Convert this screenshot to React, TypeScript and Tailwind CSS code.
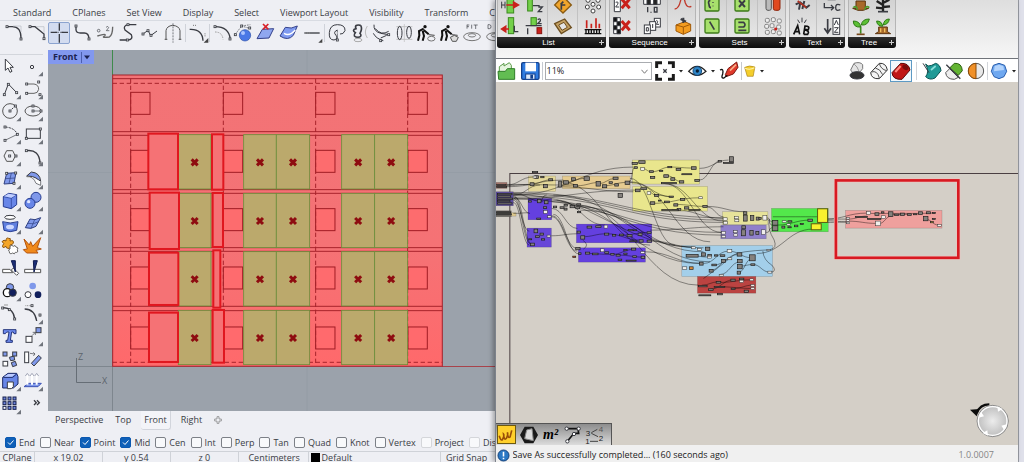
import type { ReactNode } from 'react';

interface IconDef {
  label: string;
  art: ReactNode;
  active?: boolean;
  sep?: boolean;
}

// All small icons are drawn on a 66 unit grid.
function Icon({ children, className = 'size-[22px]' }: { children: ReactNode; className?: string }) {
  return (
    <svg viewBox="0 0 66 66" fill="none" stroke="#3a3c43" strokeWidth="3" className={`shrink-0 ${className}`} aria-hidden="true">
      {children}
    </svg>
  );
}

function Pt({ x, y }: { x: number; y: number }) {
  return <rect x={x - 3} y={y - 3} width="6" height="6" fill="#eef0f4" strokeWidth="2.5" />;
}

const menuTabs = ['Standard', 'CPlanes', 'Set View', 'Display', 'Select', 'Viewport Layout', 'Visibility', 'Transform', 'Curve Tools'];

const digger = (
  <>
    <circle cx="27" cy="14" r="5" fill="#111" stroke="none" />
    <path d="M23 20L9 27L10 40L6 56M20 26L24 42L20 56M23 24L38 37" stroke="#111" strokeWidth="6" />
    <path d="M38 38L56 40" stroke="#444" />
  </>
);

const curveTools: IconDef[] = [
  { label: 'Fillet curves', art: <><path d="M12 14H28Q54 14 54 48" strokeWidth="4" /><path d="M30 12H54V30" stroke="#b9bcc4" strokeWidth="2" /><Pt x={12} y={14} /><Pt x={54} y={51} /></> },
  { label: 'Chamfer curves', art: <><path d="M11 14H27L54 36V50" strokeWidth="4" /><path d="M30 14H54V32" stroke="#b9bcc4" strokeWidth="2" /><Pt x={12} y={14} /><Pt x={54} y={50} /></> },
  { label: 'Connect curves', active: true, art: <><path d="M8 31H28M40 31H60M34 4V26M34 36V62" strokeWidth="4" /><path d="M22 31H46" strokeWidth="2" strokeDasharray="4 3" /></> },
  { label: 'Blend curves', art: <><path d="M15 12V24Q16 33 28 33H40Q54 33 54 52" strokeWidth="4" /><Pt x={15} y={12} /><Pt x={54} y={51} /></> },
  { label: 'Arc blend', art: <><path d="M10 42Q40 32 32 42Q20 48 46 45Q56 38 56 14" strokeWidth="4" stroke="#666" /><circle cx="14" cy="26" r="4" strokeWidth="2" /><path d="M36 16Q42 10 44 17L37 26H46" strokeWidth="2" /></> },
  { label: 'Adjustable blend', art: <><path d="M58 8H34Q17 11 24 24L43 38Q49 52 34 54H8" strokeWidth="4" /><Pt x={33} y={8} /><Pt x={31} y={54} /></> },
  { label: 'Match curve', art: <><path d="M12 36L27 25L35 41L54 27" strokeWidth="3" /><Pt x={12} y={36} /><Pt x={27} y={26} /><Pt x={36} y={40} /></> },
  { label: 'Symmetry', art: <><path d="M12 52V26Q14 12 32 10Q52 12 54 26V52M8 52H16M50 52H58" stroke="#555" /><path d="M33 4V62" strokeDasharray="6 3" strokeWidth="2" /></> },
  { label: 'Offset curve', sep: true, art: <><path d="M8 22Q46 20 48 56" strokeWidth="4" /><path d="M18 10H30M54 34V44" strokeWidth="3" stroke="#777" strokeDasharray="3 3" /><path d="M64 48v14H50z" fill="#444" stroke="none" /></> },
  { label: 'Offset multiple', sep: true, art: <><path d="M12 14Q54 14 58 52" strokeWidth="4" /><path d="M12 30Q34 30 36 52" stroke="#999" strokeDasharray="4 3" /><Pt x={12} y={14} /><Pt x={57} y={51} /></> },
  { label: 'Curve from surface', art: <><circle cx="36" cy="40" r="17" fill="#4a78e6" stroke="#2c4fa8" strokeWidth="2" /><circle cx="30" cy="33" r="6" fill="#a9c3ff" stroke="none" /><path d="M6 38L26 12L46 18M26 12L52 8" strokeWidth="2" strokeDasharray="5 3" /><Pt x={7} y={38} /><Pt x={26} y={12} /><Pt x={50} y={18} /></> },
  { label: 'Delete on surface', art: <><path d="M6 50L22 22L56 20L42 48Z" fill="#8fa7f0" stroke="#33408a" /><path d="M24 6L40 22M40 6L24 22" stroke="#d8232a" strokeWidth="5" /></> },
  { label: 'Project to surface', art: <><path d="M6 42L22 16Q40 22 58 12L46 40Q30 58 6 42Z" fill="#7f9af0" stroke="#33408a" /><path d="M18 34Q34 44 52 24" stroke="#fff" strokeWidth="4" /></> },
  { label: 'Extend curve', art: <><path d="M10 33H56" strokeWidth="4" /><path d="M12 33H30" stroke="#888" strokeWidth="5" strokeDasharray="3 3" /><path d="M64 50v12H52z" fill="#444" stroke="none" /></> },
  { label: 'Rebuild', sep: true, art: <><path d="M10 32Q12 8 34 8Q58 8 57 26Q52 38 42 36M10 32Q8 54 24 54Q38 50 30 40Q20 30 34 24" /><path d="M34 34V54M34 24V32" strokeWidth="2" /><Pt x={34} y={54} /></> },
  { label: 'Fair', art: <><path d="M38 10Q18 6 24 20Q10 24 22 32Q12 44 30 46Q44 44 36 34Q44 20 38 10" strokeWidth="5" /><path d="M58 12Q46 30 58 48" stroke="#bbb" /><ellipse cx="30" cy="54" rx="12" ry="5" stroke="#aaa" /></> },
  { label: 'Curve from 2 views', art: <><path d="M12 8Q10 28 32 34L56 38M10 34Q18 50 40 56M16 20Q34 42 56 28M32 48L50 40" /><Pt x={32} y={56} /><Pt x={56} y={38} /></> },
  { label: 'Cross sections', art: <><path d="M10 14H58M10 52H58" stroke="#aaa" strokeWidth="2" /><ellipse cx="20" cy="33" rx="7" ry="20" /><ellipse cx="48" cy="31" rx="7" ry="18" /><path d="M34 6V60" stroke="#bbb" strokeWidth="2" /></> },
  { label: 'Extract wireframe', art: <>{digger}<ellipse cx="46" cy="50" rx="11" ry="7" stroke="#777" /></> },
  { label: 'Tween curves', art: <>{digger}<path d="M34 46L46 40L58 46L52 58H40Z" fill="#ddd" stroke="#555" /></> },
  { label: 'Fit curve', art: <><path d="M18 8v12M18 9h7M18 14h6M32 8v12M38 9h12M44 9v12" strokeWidth="2" /><ellipse cx="33" cy="44" rx="25" ry="12" stroke="#777" /><ellipse cx="33" cy="40" rx="11" ry="5" stroke="#777" /></> },
  { label: 'Divide curve', art: <><path d="M12 8v12h4q5 0 5-6t-5-6z" strokeWidth="2" /><ellipse cx="33" cy="44" rx="25" ry="12" stroke="#777" /><ellipse cx="33" cy="40" rx="11" ry="5" stroke="#777" /></> },
];

const fly = <path d="M63 50v14H49z" fill="#70747c" stroke="none" />;
const blueFill = '#7f98ea';

const palette: IconDef[] = [
  { label: 'Pointer', art: <path d="M16 12V46L24 39L30 52L36 49L30 37H40Z" fill="#fff" /> },
  { label: 'Point', art: <><circle cx="30" cy="36" r="5" />{fly}</> },
  { label: 'Polyline', art: <><path d="M13 50L25 18L50 44" /><Pt x={13} y={50} /><Pt x={25} y={19} /><Pt x={50} y={44} />{fly}</> },
  { label: 'Curve', art: <><path d="M14 18H36Q50 20 50 34Q48 46 36 46H14" stroke="#666" /><Pt x={14} y={18} /><Pt x={50} y={12} /><Pt x={14} y={46} /><Pt x={54} y={50} />{fly}</> },
  { label: 'Circle', art: <><circle cx="30" cy="33" r="22" stroke="#555" /><path d="M30 33L45 18" strokeDasharray="5 3" /><Pt x={30} y={33} /><Pt x={46} y={18} />{fly}</> },
  { label: 'Ellipse', art: <><ellipse cx="33" cy="33" rx="24" ry="15" stroke="#555" /><path d="M33 33H56" strokeWidth="2" /><Pt x={33} y={33} /><Pt x={33} y={18} /><Pt x={57} y={33} />{fly}</> },
  { label: 'Arc', art: <><path d="M15 12Q44 14 52 34" strokeDasharray="7 3" /><path d="M15 52L52 34" strokeWidth="2" /><Pt x={15} y={12} /><Pt x={15} y={52} /><Pt x={52} y={34} />{fly}</> },
  { label: 'Rectangle', art: <><rect x="13" y="18" width="42" height="28" /><Pt x={13} y={46} /><Pt x={55} y={18} />{fly}</> },
  { label: 'Polygon', art: <><path d="M12 33L20 17H38L46 33L38 49H20Z" stroke="#555" /><Pt x={29} y={33} /><Pt x={48} y={33} />{fly}</> },
  { label: 'Fillet', art: <><path d="M13 17Q52 12 54 54" strokeWidth="4" /><Pt x={13} y={17} /><Pt x={54} y={54} />{fly}</> },
  { label: 'Surface from points', art: <><path d="M20 16L48 14L42 46L12 48Z" fill={blueFill} stroke="#2e3f80" /><path d="M34 15L27 47M16 32L45 30" stroke="#2e3f80" strokeWidth="2" /><Pt x={20} y={16} /><Pt x={47} y={15} /><Pt x={42} y={46} />{fly}</> },
  { label: 'Surface from curves', art: <><path d="M14 24L28 12Q54 14 56 40L42 30Q34 24 14 24" fill={blueFill} /><path d="M14 26Q34 24 42 46L56 52V40" fill="#fff" strokeWidth="2" />{fly}</> },
  { label: 'Box', art: <><path d="M10 20L26 10L50 14V44L34 56L10 50Z" fill="#6886e8" stroke="#263c90" /><path d="M10 20L34 25V56M34 25L50 14" stroke="#263c90" strokeWidth="2" /><path d="M12 19L26 11L48 15L34 23Z" fill="#c0ceff" stroke="none" />{fly}</> },
  { label: 'Sphere', art: <><circle cx="42" cy="22" r="15" fill={blueFill} stroke="#263c90" /><circle cx="24" cy="40" r="15" fill="#6886e8" stroke="#263c90" /><circle cx="20" cy="35" r="5" fill="#dfe7ff" stroke="none" />{fly}</> },
  { label: 'Cylinder', art: <><ellipse cx="30" cy="13" rx="16" ry="6" fill="#fff" /><path d="M8 26Q30 34 54 26L50 52Q30 60 12 52Z" fill="#5f7fe0" stroke="#263c90" /><ellipse cx="30" cy="42" rx="12" ry="7" fill="#cdd8ff" stroke="none" />{fly}</> },
  { label: 'Surface edit', art: <><path d="M24 18Q38 24 56 14L42 40Q28 50 10 44Z" fill={blueFill} stroke="#2e3f80" /><path d="M17 31Q34 36 50 26M38 20L27 46" stroke="#2e3f80" strokeWidth="2" />{fly}</> },
  { label: 'Join', art: <><path d="M6 20Q12 12 18 18Q18 6 26 10Q34 8 30 18Q42 14 40 24Q38 30 30 30Q34 42 24 40Q18 40 18 34Q6 42 8 32Q8 28 12 26Z" fill="#f4a62a" stroke="#8a5410" /><path d="M30 34Q36 28 40 34Q46 28 48 36Q58 38 52 44Q56 54 46 52Q44 60 38 54Q28 60 28 50Q22 44 30 42Z" fill="#fff" stroke="#666" /></> },
  { label: 'Explode', art: <path d="M6 12L22 30L26 20L32 34L56 8L46 38L58 42L42 46L48 54H14L4 44L16 42Z" fill="#f08a1c" stroke="#b4530c" /> },
  { label: 'Trim', art: <><path d="M8 34H30L38 44H8ZM34 36L40 30L56 46L50 52Z" fill="#fff" stroke="#555" /><path d="M34 8H46V42Z" fill="#1c2f78" stroke="#101c50" /></> },
  { label: 'Split', art: <><path d="M8 34H56V44H8Z" fill="#fff" stroke="#555" /><path d="M34 8H46L36 42Z" fill="#1c2f78" stroke="#101c50" /></> },
  { label: 'Group', art: <><circle cx="30" cy="22" r="11" fill={blueFill} /><circle cx="22" cy="38" r="12" fill="#fff" stroke="#111" strokeWidth="4" /><circle cx="38" cy="38" r="11" fill="#111f5c" />{fly}</> },
  { label: 'Ungroup', art: <><circle cx="32" cy="18" r="10" fill={blueFill} stroke="none" /><circle cx="18" cy="44" r="9" fill="#fff" /><circle cx="48" cy="44" r="10" fill="#111f5c" stroke="none" /></> },
  { label: 'Edit points', art: <><path d="M8 14Q40 14 44 48" strokeWidth="4" /><path d="M12 6H24" stroke="#999" /><Pt x={8} y={15} /><Pt x={28} y={20} /><Pt x={44} y={48} /></> },
  { label: 'Control points', art: <><path d="M8 18Q38 18 44 54" strokeWidth="4" /><path d="M10 8H30M54 34V42" stroke="#999" strokeDasharray="3 2" /><Pt x={30} y={8} /><Pt x={54} y={36} />{fly}</> },
  { label: 'Text', art: <path d="M10 14H48V26H42L40 21H35L31 46H37V52H18V46H23L27 21H20L16 26H10Z" fill="#6f8cf0" stroke="#26367c" /> },
  { label: 'Scale', art: <><rect x="12" y="34" width="18" height="18" fill="#fff" /><rect x="42" y="8" width="15" height="15" fill={blueFill} /><path d="M30 32L40 22M32 22h8v8" strokeWidth="2" />{fly}</> },
  { label: 'Array', art: <><rect x="9" y="12" width="12" height="12" fill={blueFill} /><path d="M28 28L42 24L44 36L32 38Z" fill={blueFill} /><rect x="38" y="12" width="12" height="12" fill={blueFill} /><rect x="9" y="40" width="14" height="14" fill="#fff" /><path d="M34 44L46 40L50 52L38 56Z" fill={blueFill} /></> },
  { label: 'Rotate', art: <><rect x="8" y="12" width="12" height="32" fill="#fff" /><path d="M28 46L50 22L58 30L36 54Z" fill={blueFill} /><path d="M24 16L38 18M34 13L39 18L34 24" strokeWidth="2" /></> },
  { label: 'Boolean', art: <><path d="M8 22L24 10H50L54 20V42L40 54H8Z" fill="#6886e8" stroke="#1c2a66" /><path d="M10 22H38L50 12" stroke="#1c2a66" /><path d="M22 36H40V50L34 56H22Z" fill="#fff" /><path d="M12 20L25 12H46L36 20Z" fill="#bccbff" stroke="none" />{fly}</> },
  { label: 'Offset surface', art: <><path d="M6 50H48L58 40H20Z" fill="#7f98ea" stroke="#3d53b5" /><path d="M16 44V14M30 44V14M44 44V14" stroke="#fff" strokeWidth="6" /><path d="M10 18L16 10L22 18M24 18L30 10L36 18M38 18L44 10L50 18" strokeWidth="3" stroke="#a4a8b8" />{fly}</> },
  { label: 'Grid array', art: <>{[12, 26, 40].map((y) => [9, 24, 39].map((x) => <rect key={`${x}-${y}`} x={x} y={y} width="9" height="9" fill={x === 9 && y === 40 ? '#fff' : '#6f86e0'} stroke="#17204d" />))}{fly}</> },
  { label: 'More tools', art: <path d="M36 22L43 29L36 36M45 22L52 29L45 36" strokeWidth="4" /> },
];

const snaps = [
  { name: 'End', on: true }, { name: 'Near', on: false }, { name: 'Point', on: true }, { name: 'Mid', on: true },
  { name: 'Cen', on: false }, { name: 'Int', on: false }, { name: 'Perp', on: false }, { name: 'Tan', on: false },
  { name: 'Quad', on: false }, { name: 'Knot', on: false }, { name: 'Vertex', on: false },
  { name: 'Project', on: false, faint: true }, { name: 'Disable', on: false, faint: true },
];

const floorY = [209, 385, 560, 736];
const panelCols = [[235, 98], [431, 98], [529, 100], [725, 99], [824, 99]];
const marks = [[145, 206, 89, 167], [149, 383, 88, 169], [147, 563, 88, 157], [147, 743, 87, 148], [336, 208, 34, 166], [338, 384, 31, 162], [340, 556, 21, 172], [338, 735, 34, 158]];

function Facade() {
  return (
    <svg viewBox="48 50 447 361" preserveAspectRatio="xMinYMin slice" className="absolute inset-0 size-full">
      <defs>
        <linearGradient id="wall" x1="0" y1="0" x2="0" y2="1">
          <stop offset="0" stopColor="#f27376" />
          <stop offset="0.6" stopColor="#f57275" />
          <stop offset="1" stopColor="#ff696b" />
        </linearGradient>
      </defs>
      <path d="M307 50V412M48 172.500H495" stroke="#929aa3" strokeWidth="1" opacity="0.6" />
      <path d="M48 366.500H112M112.500 366V412" stroke="#7e868e" />
      <path d="M112.500 50V75" stroke="#3f8a4c" />
      <path d="M442 366.500H495" stroke="#a8434b" />
      <g transform="translate(100 65) scale(0.3333)" fill="none">
        <rect x="38" y="30" width="989" height="874" fill="url(#wall)" stroke="#a3222b" strokeWidth="3" />
        {[82, 256, 431, 606, 786].map((y) =>
          [92, 370, 647, 924].map((x) => (
            <rect key={`${x}-${y}`} x={x} y={y} width="58" height="66" fill="#ff6a6d" fillOpacity={y > 82 ? 0.8 : 0.2} stroke="#a01c24" strokeWidth="3" />
          ))
        )}
        <path d="M38 41H1027M38 200H1027M38 211H1027M38 374H1027M38 385H1027M38 548H1027M38 559H1027M38 724H1027M38 737H1027" stroke="#a8232b" strokeWidth="3" />
        <path d="M38 55H1027M38 892H1027M92 41V895M370 41V895M647 41V895M923 41V895" stroke="#a8232b" strokeWidth="3" strokeDasharray="13 8" />
        {floorY.map((y) =>
          panelCols.map(([x, w]) => (
            <g key={`${x}-${y}`}>
              <rect x={x} y={y} width={w} height="163" fill="#bba96c" stroke="#6c8f3c" strokeWidth="2.500" />
              <path d={`M${x + w / 2 - 9} ${y + 74}l18 18m0 -18l-18 18`} stroke="#8e0c10" strokeWidth="9" />
            </g>
          ))
        )}
        {marks.map(([x, y, w, h]) => (
          <rect key={`${x}-${y}`} x={x} y={y} width={w} height={h} fill="#f57275" stroke="#e0171f" strokeWidth="6" />
        ))}
      </g>
      <path d="M76.500 358V382.500H101" stroke="#666e76" fill="none" />
      <g fill="#5c646c" fontSize="9" className="font-['Open_Sans',sans-serif]">
        <text x="78" y="360">Z</text>
        <text x="102" y="384">X</text>
      </g>
    </svg>
  );
}

// Graph coordinates: [x, y, w, h]
const groups: [number, number, number, number, string][] = [
  [115, 93, 82, 46, '#e3d79a'], [217, 93, 203, 38, '#e6cb90'], [427, 45, 201, 72, '#e9e68d'], [428, 124, 224, 74, '#e9e68d'],
  [114, 160, 71, 64, '#6440df'], [111, 249, 73, 57, '#6747d8'], [259, 237, 226, 56, '#6440df'], [265, 308, 201, 43, '#6440df'],
  [697, 200, 136, 38, '#e6e29a'], [692, 240, 136, 41, '#9080cb'], [575, 301, 272, 93, '#a3cfea'], [622, 394, 175, 50, '#bb4341'],
  [844, 190, 170, 70, '#53e84b'], [1066, 196, 289, 53, '#efa09d'],
  [18, 112, 33, 18, '#a0736b'], [18, 140, 52, 42, '#5a4b9a'], [18, 197, 46, 18, '#6f6c66'], [64, 203, 14, 10, '#dcc78e'],
];

const wires = [
  [50, 120, 128, 96], [50, 122, 115, 118], [50, 125, 220, 105], [50, 118, 250, 120], [70, 145, 160, 170], [70, 150, 150, 120], [70, 155, 120, 205],
  [70, 150, 430, 66], [70, 160, 440, 135], [70, 142, 700, 218], [70, 146, 700, 225], [70, 152, 700, 232], [70, 158, 695, 262],
  [70, 162, 695, 270], [70, 148, 640, 308], [185, 170, 630, 355], [190, 150, 605, 306], [200, 125, 430, 140], [210, 110, 480, 300],
  [70, 165, 118, 258], [70, 172, 118, 300], [72, 160, 122, 296], [74, 155, 126, 298], [184, 272, 262, 266], [185, 212, 262, 310], [185, 215, 262, 318],
  [190, 208, 266, 326], [185, 190, 262, 250], [70, 205, 115, 203], [200, 165, 345, 240], [260, 180, 625, 420], [270, 185, 660, 350], [270, 195, 640, 320],
  [420, 110, 545, 155], [420, 100, 555, 300], [420, 112, 660, 290], [520, 115, 695, 262], [520, 115, 700, 228], [545, 193, 700, 220], [480, 255, 700, 245],
  [485, 288, 610, 306], [465, 320, 635, 355], [415, 110, 437, 66], [628, 70, 715, 45], [628, 105, 690, 48], [650, 184, 765, 200], [652, 186, 700, 215],
  [828, 218, 848, 230], [828, 222, 848, 240], [828, 262, 848, 248], [848, 215, 985, 215], [860, 240, 960, 225], [800, 325, 968, 252], [1012, 222, 1070, 222],
  [1012, 227, 1070, 230], [1012, 232, 1072, 231], [1005, 222, 1130, 204], [1072, 228, 1160, 235], [1073, 222, 1130, 213], [1165, 236, 1205, 212],
  [1130, 205, 1280, 205], [1280, 205, 1335, 204], [1305, 222, 1345, 240], [1205, 208, 1260, 208],
  [120, 118, 185, 104], [145, 170, 170, 150], [225, 112, 285, 100], [260, 122, 330, 112], [325, 116, 375, 100], [340, 122, 410, 112],
  [455, 70, 485, 80], [485, 80, 540, 66], [530, 92, 575, 110], [540, 66, 610, 69], [475, 142, 500, 150], [500, 150, 545, 155], [555, 178, 645, 184], [485, 175, 630, 158],
  [275, 275, 350, 266], [350, 266, 450, 285], [395, 270, 475, 262], [290, 325, 365, 328], [365, 328, 430, 313], [385, 330, 460, 336],
  [600, 332, 660, 336], [640, 355, 715, 318], [660, 376, 720, 342], [690, 388, 750, 350], [670, 360, 745, 328], [715, 318, 785, 338], [745, 382, 785, 340], [750, 363, 788, 358],
  [635, 420, 685, 410], [660, 432, 730, 404], [685, 412, 785, 404], [690, 425, 788, 430], [730, 430, 788, 420], [788, 358, 838, 381],
];

const greyNodes = [
  [127, 79, 16, 4], [120, 113, 12, 9], [134, 92, 11, 8], [152, 94, 10, 4], [160, 118, 12, 10], [176, 101, 12, 6], [206, 108, 8, 18], [220, 107, 15, 10], [244, 98, 12, 8], [250, 118, 12, 8],
  [282, 95, 16, 11], [318, 109, 13, 14], [337, 119, 13, 9], [369, 96, 15, 7], [357, 110, 10, 5], [374, 116, 11, 7], [405, 108, 14, 10], [384, 145, 13, 12], [426, 52, 16, 6], [446, 47, 19, 8], [432, 65, 10, 5],
  [478, 77, 12, 5], [481, 94, 13, 6], [508, 76, 10, 3], [533, 64, 12, 4], [558, 70, 14, 6], [521, 89, 14, 8], [542, 98, 12, 8], [575, 86, 30, 3], [604, 65, 14, 8], [568, 107, 13, 7], [614, 103, 14, 6], [514, 112, 45, 4],
  [436, 132, 14, 8], [452, 128, 18, 5], [493, 148, 13, 6], [481, 170, 13, 8], [505, 165, 8, 3], [523, 168, 15, 5], [537, 153, 13, 4], [551, 176, 12, 7], [571, 160, 13, 6], [561, 190, 11, 6], [583, 185, 13, 7], [515, 193, 50, 4], [596, 193, 34, 3], [638, 181, 13, 6],
  [142, 163, 11, 10], [163, 167, 11, 9], [115, 167, 9, 4], [160, 185, 10, 5], [140, 219, 12, 4], [132, 252, 11, 11], [150, 264, 10, 6], [136, 272, 12, 5], [121, 294, 12, 8], [154, 281, 10, 4], [116, 281, 9, 3],
  [210, 185, 12, 5], [222, 178, 10, 5], [222, 189, 9, 6], [240, 181, 14, 7], [257, 185, 12, 6], [260, 176, 12, 4], [262, 199, 10, 4], [190, 183, 10, 5],
  [261, 258, 10, 6], [272, 272, 12, 10], [291, 243, 14, 6], [317, 242, 16, 5], [343, 264, 13, 6], [367, 268, 10, 5], [388, 267, 12, 5], [411, 269, 15, 6], [414, 253, 13, 4], [444, 264, 12, 7], [471, 260, 12, 5], [430, 254, 10, 3], [419, 287, 22, 3], [447, 284, 12, 7], [471, 285, 13, 6],
  [257, 307, 13, 7], [265, 323, 8, 5], [286, 321, 13, 6], [307, 324, 17, 5], [344, 320, 12, 5], [362, 325, 10, 5], [378, 328, 12, 5], [401, 313, 10, 4], [424, 309, 13, 6], [401, 324, 10, 4], [384, 342, 11, 4], [408, 345, 30, 3], [428, 332, 11, 5], [453, 333, 11, 7],
  [684, 46, 10, 5], [700, 52, 30, 3], [718, 35, 12, 15], [760, 200, 10, 8], [760, 210, 11, 18], [781, 211, 10, 15], [798, 216, 9, 9], [755, 242, 11, 9], [754, 254, 12, 18], [779, 256, 10, 14], [797, 259, 9, 9], [806, 217, 7, 6],
  [847, 226, 16, 14], [847, 242, 16, 15], [875, 243, 9, 6], [893, 227, 12, 4], [893, 245, 10, 3], [913, 240, 10, 5], [953, 222, 14, 7], [930, 235, 10, 3],
  [588, 328, 36, 8], [634, 323, 12, 10], [646, 306, 13, 10], [628, 351, 11, 9], [653, 328, 11, 6], [673, 329, 10, 4], [690, 329, 14, 5], [665, 357, 14, 5], [657, 373, 12, 8], [694, 343, 12, 9], [741, 323, 14, 10], [742, 343, 14, 10], [742, 358, 14, 13], [741, 378, 10, 9], [778, 329, 17, 18], [782, 356, 12, 5],
  [625, 421, 26, 4], [655, 431, 14, 5], [672, 424, 32, 3], [678, 409, 14, 5], [722, 402, 13, 6], [748, 399, 13, 5], [723, 429, 12, 4], [762, 435, 13, 7], [682, 445, 15, 4], [626, 449, 36, 3],
  [1154, 203, 12, 8], [1173, 200, 8, 4], [1195, 200, 13, 14], [1212, 207, 14, 4], [1231, 204, 12, 7], [1252, 206, 11, 5], [1270, 206, 10, 3], [1285, 200, 12, 8], [1309, 200, 12, 6], [1326, 202, 9, 3], [1096, 214, 36, 3], [1132, 220, 40, 3], [1300, 214, 13, 13], [1326, 220, 9, 3],
  [20, 118, 28, 3], [20, 124, 30, 3], [22, 145, 44, 4], [22, 152, 40, 4], [22, 159, 46, 4], [22, 166, 38, 4], [22, 173, 44, 4], [20, 200, 42, 3], [20, 206, 44, 3],
];

const whiteNodes = [
  [129, 93, 10, 6], [161, 196, 11, 9], [173, 212, 10, 6], [171, 270, 10, 6], [342, 240, 11, 9], [332, 311, 10, 9], [452, 68, 11, 8], [471, 140, 11, 8], [626, 155, 11, 6], [452, 319, 12, 6],
  [699, 218, 12, 8], [700, 229, 12, 8], [733, 214, 12, 7], [734, 223, 12, 7], [818, 211, 12, 14], [694, 259, 12, 8], [695, 271, 11, 7], [730, 256, 11, 7], [731, 266, 11, 7], [814, 254, 12, 14], [876, 227, 12, 5], [890, 236, 10, 5],
  [604, 305, 12, 6], [622, 310, 12, 6], [711, 313, 14, 9], [713, 338, 12, 6], [652, 333, 12, 6], [577, 365, 13, 8], [687, 388, 13, 5], [833, 378, 12, 6], [830, 313, 10, 4], [779, 401, 11, 6], [748, 405, 12, 7], [782, 418, 11, 6], [782, 427, 11, 6],
  [1129, 199, 12, 9], [1173, 212, 12, 8], [1156, 228, 15, 14], [1068, 217, 10, 5], [1068, 224, 10, 5], [1068, 231, 10, 5], [1341, 238, 12, 6],
];

function curve([x1, y1, x2, y2]: number[]) {
  const d = Math.max(Math.abs(x2 - x1) * 0.45, 16);
  return `M${x1} ${y1}C${x1 + d} ${y1} ${x2 - d} ${y2} ${x2} ${y2}`;
}

function Graph() {
  return (
    <svg viewBox="496 82 522 363" preserveAspectRatio="xMinYMin slice" className="absolute inset-0 size-full">
      <g transform="translate(490 145) scale(0.3333)" fill="none">
        <path d="M59.500 900V85H1700" stroke="#4a3f42" strokeWidth="3" />
        {groups.map(([x, y, w, h, fill]) => (
          <rect key={`${x}-${y}`} x={x} y={y} width={w} height={h} fill={fill} stroke="#00000040" strokeWidth="1.500" />
        ))}
        <g stroke="#000" strokeOpacity="0.6" strokeWidth="2">
          {wires.map((w, i) => <path key={i} d={curve(w)} />)}
          <path d="M838 222Q830 250 852 285Q862 310 838 314M818 318Q820 345 845 360Q862 378 842 382M640 400Q670 380 730 330Q745 318 838 314M278 285Q300 300 280 312" />
        </g>
        <g fill="#85817d" stroke="#1c1c1c" strokeWidth="2">
          {greyNodes.map(([x, y, w, h], i) => <rect key={i} x={x} y={y} width={w} height={h} />)}
        </g>
        <g fill="#f1efec" stroke="#333" strokeWidth="1.500">
          {whiteNodes.map(([x, y, w, h], i) => <rect key={i} x={x} y={y} width={w} height={h} />)}
        </g>
        <rect x="598" y="365" width="11" height="8" fill="#d98b3a" stroke="#222" strokeWidth="2" />
        <rect x="248" y="333" width="9" height="4" fill="#c4491d" stroke="#222" strokeWidth="2" />
        <rect x="1321" y="229" width="8" height="4" fill="#d0b52b" stroke="#222" strokeWidth="2" />
        <g fill="#f8f22e" stroke="#5d5a10" strokeWidth="3">
          <rect x="982" y="191" width="30" height="41" />
          <rect x="963" y="236" width="30" height="18" />
        </g>
        <rect x="1037" y="106" width="367" height="232" stroke="#eec5c0" strokeWidth="12" />
        <rect x="1037" y="106" width="367" height="232" stroke="#d81a22" strokeWidth="8" />
      </g>
    </svg>
  );
}

const tile = <rect x="12" y="12" width="42" height="42" rx="4" fill="#a7e06c" stroke="#3c7a18" strokeWidth="4" />;
const redX = <path d="M32 18L56 46M56 18L32 46" stroke="#c9211b" strokeWidth="9" />;

interface RibbonGroup {
  name: string;
  width: string;
  columns: [IconDef, IconDef][];
}

const ribbon: RibbonGroup[] = [
  {
    name: 'List', width: 'w-[109px]', columns: [
      [
        { label: 'Insert items', art: <><rect x="24" y="0" width="20" height="60" fill="#74d04a" stroke="#3a8a1c" /><path d="M8 26V46M8 36H18M18 26V46" /><path d="M22 36H44M44 28L58 36L44 44Z" stroke="#c9211b" fill="#c9211b" strokeWidth="5" /></> },
        { label: 'List length', art: <><rect x="28" y="8" width="16" height="48" fill="#74d04a" stroke="#3a8a1c" /><path d="M10 42H30M20 34L8 42L20 50Z" stroke="#c9211b" fill="#c9211b" strokeWidth="5" /><path d="M46 32V50H58" strokeWidth="4" /></> },
      ],
      [
        { label: 'Sort list', art: <><rect x="14" y="2" width="14" height="52" fill="#74d04a" stroke="#3a8a1c" /><path d="M30 38H50M46 42H58L46 56H58" strokeWidth="4" /></> },
        { label: 'Split list', art: <><rect x="24" y="8" width="16" height="24" fill="#74d04a" stroke="#3a8a1c" /><rect x="42" y="38" width="14" height="18" fill="#c9211b" stroke="#8a1510" /><path d="M8 32H56M14 40V58M44 14Q54 8 52 18L44 26H56" strokeWidth="4" /></> },
      ],
      [
        { label: 'Shift list', sep: true, art: <><path d="M33 10L58 36L33 60L8 36Z" fill="#f0a52c" stroke="#8a5a10" strokeWidth="4" /><path d="M28 50V36H40M34 26L26 34" strokeWidth="5" /></> },
        { label: 'Weave', art: <><path d="M8 26L38 12L58 38L28 56Z" fill="#c4a062" stroke="#6d4f20" strokeWidth="4" /><path d="M20 30L36 22L46 37L30 46Z" fill="#e5e5e5" stroke="#6d4f20" /></> },
      ],
      [
        { label: 'Item index', sep: true, art: <>{[[33, 14], [18, 22], [48, 22], [33, 34], [16, 42], [50, 42], [33, 54]].map(([x, y]) => <circle key={`${x}-${y}`} cx={x} cy={y} r="6" fill="#fff" stroke="#444" />)}</> },
        { label: 'Sub list', art: <><path d="M12 56V44M20 56V44M28 56V44M36 56V44M44 56V44M52 56V44M8 56H58M8 44H58" strokeWidth="4" stroke="#111" /><path d="M14 40V16M28 40V26M42 40V10M52 40V26" stroke="#c9211b" strokeWidth="5" /></> },
      ],
    ],
  },
  {
    name: 'Sequence', width: 'w-[87px]', columns: [
      [
        { label: 'Cull index', art: <><path d="M10 4H28V56H10Z" fill="#fff" /><path d="M14 28Q24 24 20 34L14 42H24" />{redX}</> },
        { label: 'Cull pattern', art: <><path d="M8 8H28V56H8Z" fill="#fff" /><path d="M8 8h10v12h-10zM18 20h10v12h-10zM8 32h10v12h-10zM18 44h10v12h-10z" fill="#111" />{redX}</> },
      ],
      [
        { label: 'Range', sep: true, art: <><path d="M8 18H58V34H8Z" fill="#fff" /><path d="M18 18h10v16h-10zM38 18h10v16h-10z" fill="#222" /><path d="M20 42V58M30 56v3M40 43h8v14h-8z" strokeWidth="4" /></> },
        { label: 'Series', art: <><rect x="40" y="10" width="18" height="26" fill="#fff" /><rect x="26" y="20" width="18" height="26" fill="#fff" /><rect x="10" y="30" width="18" height="26" fill="#fff" /><path d="M16 38h6v10h-6zM35 27v12M46 16q8 2 0 12h8" /></> },
      ],
      [
        { label: 'Random', sep: true, art: <path d="M8 48Q20 48 26 22T40 30Q46 46 58 40" stroke="#c0392b" strokeWidth="4" /> },
        { label: 'Jitter', art: <><path d="M12 30L38 20L56 28V48L34 58L12 48Z" fill="#f39c1f" stroke="#a15a08" /><path d="M12 30L34 36V58M34 36L56 28" stroke="#a15a08" /><path d="M34 8V24M26 12L42 20" strokeWidth="6" /></> },
      ],
    ],
  },
  {
    name: 'Sets', width: 'w-[87px]', columns: [
      [
        { label: 'Create set', art: <>{tile}<path d="M28 22Q20 24 24 34Q24 44 30 44M36 28V30M36 38V40" strokeWidth="5" /></> },
        { label: 'Set difference', art: <>{tile}<path d="M26 20L40 44" strokeWidth="5" /></> },
      ],
      [
        { label: 'Set intersection', sep: true, art: <>{tile}<path d="M24 22L42 42M42 22L24 42" strokeWidth="6" /></> },
        { label: 'Sub set', art: <>{tile}<path d="M22 22H38Q46 29 38 36H22M22 46H46" strokeWidth="5" /></> },
      ],
      [
        { label: 'Replace members', sep: true, art: <><rect x="12" y="2" width="16" height="50" rx="6" fill="#bbb" stroke="#555" /><rect x="34" y="2" width="20" height="50" rx="6" fill="#e0491f" stroke="#8f240a" /></> },
        { label: 'Member index', art: <>{[[16, 16], [34, 14], [52, 18], [14, 34], [30, 32], [50, 36], [16, 52], [34, 50], [52, 54]].map(([x, y]) => <rect key={`${x}-${y}`} x={x - 6} y={y - 6} width="12" height="12" rx="4" fill="#eee" stroke="#888" />)}<rect x="37" y="38" width="8" height="8" fill="#c9211b" stroke="none" /></> },
      ],
    ],
  },
  {
    name: 'Text', width: 'w-[56px]', columns: [
      [
        { label: 'Concatenate', art: <><path d="M14 34L28 28L46 44L56 36M28 28L24 50M40 24L34 48" strokeWidth="6" /><path d="M20 24L46 44" stroke="#b03020" strokeWidth="5" /></> },
        { label: 'Characters', art: <><path d="M8 58L20 32L26 58M13 50H25M38 58L42 33Q58 33 52 44H40Q58 48 50 58H38" strokeWidth="5" stroke="#111" /><path d="M20 14L26 24M33 8V22M46 14L40 24" /></> },
      ],
      [
        { label: 'Text split', sep: true, art: <><path d="M10 30V44H36M30 36L38 44L30 52M58 36Q44 30 44 44Q44 56 58 50M20 20H44" strokeWidth="4" /></> },
        { label: 'Sort text', art: <><path d="M20 12V50M10 40L20 54L30 40" strokeWidth="5" /><rect x="36" y="10" width="20" height="48" fill="#fff" /><path d="M40 30L46 16L52 30M40 38H52L40 52H52" /></> },
      ],
    ],
  },
  {
    name: 'Tree', width: 'w-[48px]', columns: [
      [
        { label: 'Flatten tree', art: <><path d="M18 24H46V46H56L40 52H24L8 46H18Z" fill="#a8692a" stroke="#5d3510" /><path d="M10 44Q20 36 22 50M44 50Q48 36 58 44" stroke="#4f9a2a" strokeWidth="5" /></> },
        { label: 'Graft tree', art: <><path d="M32 56V34" stroke="#3c8a1e" strokeWidth="5" /><path d="M32 36Q10 38 10 18Q30 18 32 36ZM34 30Q36 12 58 12Q54 32 34 30Z" fill="#5cc035" stroke="#2c7a14" /><path d="M20 58H44" stroke="#7a4b1e" strokeWidth="5" /></> },
      ],
      [
        { label: 'Prune tree', art: <><path d="M33 56V20M33 36L14 24M33 30L52 20M33 42L54 40M33 46L12 44" strokeWidth="7" stroke="#222" /><path d="M18 56H48" strokeWidth="5" /></> },
        { label: 'Simplify tree', art: <><path d="M20 36H46V50L56 56H10L20 50Z" fill="#a8692a" stroke="#5d3510" /><path d="M26 40V52M38 40V52" stroke="#f0c060" strokeWidth="4" /><path d="M32 34Q14 32 14 18Q30 18 32 34ZM34 30Q36 12 52 12Q50 28 34 30Z" fill="#5cc035" stroke="#2c7a14" /></> },
      ],
    ],
  },
];

const barButton = 'flex h-[22px] w-[22px] items-center justify-center';
const caret = (
  <svg viewBox="0 0 8 8" className="size-[4px] shrink-0" aria-hidden="true"><path d="M0 2h8L4 7z" fill="#222" /></svg>
);

function DocumentBar() {
  return (
    <div className="flex h-[24px] shrink-0 items-center border-t border-[#70747a] bg-white">
      <button aria-label="Open" className={`${barButton} mr-px`}>
        <Icon><path d="M10 20L24 10V18L40 8L46 16V52H10Z" fill="#e6f5df" stroke="#5a9a48" /><path d="M6 34H28L34 26H56V58H8Z" fill="#62bd52" stroke="#2f7d28" /></Icon>
      </button>
      <button aria-label="Save" className={barButton}>
        <Icon><rect x="8" y="8" width="52" height="50" rx="4" fill="#2f7be0" stroke="#123f8c" strokeWidth="4" /><rect x="19" y="8" width="32" height="26" fill="#fff" stroke="none" /><rect x="20" y="42" width="28" height="16" fill="#dce8f8" stroke="#123f8c" /><rect x="34" y="44" width="8" height="12" fill="#123f8c" stroke="none" /></Icon>
      </button>
      <span className="mx-px h-[18px] w-px bg-[#c6cad0]" />
      <div className="relative ml-px w-[107px]">
        <select aria-label="Zoom level" defaultValue="11%" className="h-[18px] w-full appearance-none border border-[#a9acb0] bg-white pl-px text-[9px] leading-[14px] text-[#222]">
          <option>11%</option>
          <option>50%</option>
          <option>100%</option>
        </select>
        <svg viewBox="0 0 8 8" className="pointer-events-none absolute top-[6px] right-[4px] size-[7px]" aria-hidden="true">
          <path d="M0.500 2L4 6L7.500 2" fill="none" stroke="#666" />
        </svg>
      </div>
      <button aria-label="Zoom extents" className={`${barButton} ml-[2px]`}>
        <Icon><path d="M8 24V8H24M42 8H58V24M58 42V58H42M24 58H8V42" strokeWidth="9" stroke="#1a1a1a" /><path d="M28 28L38 38M38 28L28 38" strokeWidth="4" /></Icon>
      </button>
      <span className="mx-[3px]">{caret}</span>
      <button aria-label="Named views" className={barButton}>
        <Icon><path d="M8 34Q33 4 60 34Q33 58 8 34Z" fill="#fff" stroke="#222" strokeWidth="4" /><circle cx="34" cy="33" r="13" fill="#2f86c8" stroke="#124a7c" /><circle cx="34" cy="33" r="5" fill="#0b2036" stroke="none" /></Icon>
      </button>
      <span className="mx-[3px]">{caret}</span>
      <button aria-label="Sketch" className={barButton}>
        <Icon><path d="M22 44L30 26L56 6L60 22L46 42L24 50Z" fill="#e0392b" stroke="#7a1a12" /><path d="M36 32L54 14" stroke="#f6b08a" strokeWidth="5" /><path d="M6 30Q18 24 14 42Q8 56 18 54L28 46" strokeWidth="4" stroke="#111" /></Icon>
      </button>
      <span className="mx-px h-[18px] w-px bg-[#c6cad0]" />
      <button aria-label="Widgets" className="flex h-[22px] w-[14px] items-center justify-center">
        <Icon className="size-[14px]"><path d="M8 16Q30 4 56 14L48 58H20Z" fill="#f4ce2c" stroke="#a47c08" /><path d="M10 20Q32 30 54 18" stroke="#fff3b0" strokeWidth="5" /></Icon>
      </button>
      <span className="ml-[3px]">{caret}</span>
      <div className="flex-1" />
      <button aria-label="No preview" className={barButton}>
        <Icon><path d="M14 30L24 10Q42 4 50 14V26L40 38L20 38Z" fill="#e4e4e4" stroke="#777" /><path d="M24 12Q34 18 40 36" stroke="#999" /><ellipse cx="33" cy="46" rx="21" ry="11" fill="#333" /></Icon>
      </button>
      <button aria-label="Wireframe preview" className={barButton}>
        <Icon><path d="M8 38L34 10Q54 8 58 30L34 56Q10 58 8 38Z" fill="#f4f4f4" stroke="#333" /><path d="M10 36Q28 30 34 54M34 10Q38 28 56 32M22 24Q36 26 44 44" stroke="#555" /></Icon>
      </button>
      <button aria-label="Shaded preview" className={`${barButton} border border-[#5d9ac4] bg-[#f2f8fc]`}>
        <Icon><path d="M6 38L32 10Q56 8 60 30L36 58Q8 60 6 38Z" fill="#c01716" stroke="#5d0808" /><ellipse cx="46" cy="22" rx="10" ry="7" fill="#7a0d0d" stroke="none" transform="rotate(40 46 22)" /><path d="M16 36L32 18" stroke="#ff8a80" strokeWidth="6" /></Icon>
      </button>
      <span className="mx-[4px] h-[18px] w-px bg-[#d2d5d9]" />
      <button aria-label="Preview selected" className={barButton}>
        <Icon><path d="M14 12Q20 22 32 16L44 10Q58 14 60 32L42 54Q26 62 14 50Q26 36 14 12Z" fill="#1f9a96" stroke="#0b5553" /><path d="M30 30L44 18" stroke="#8ce0dc" strokeWidth="5" /><path d="M6 10L24 38" strokeWidth="3" /></Icon>
      </button>
      <button aria-label="Clipping preview" className={barButton}>
        <Icon><path d="M8 38L20 26L46 52L34 58Q10 58 8 38Z" fill="#eee" stroke="#555" /><path d="M20 24L34 10Q56 8 58 32L46 46Z" fill="#63b432" stroke="#2c6010" /><path d="M10 14L52 56" strokeWidth="4" /></Icon>
      </button>
      <button aria-label="Display quality" className={barButton}>
        <Icon><circle cx="33" cy="33" r="23" fill="#e8e8e8" stroke="#555" /><path d="M33 10A23 23 0 0 0 33 56Z" fill="#f09028" stroke="#8a4a08" /></Icon>
      </button>
      <span className="h-[18px] w-px bg-[#d2d5d9]" />
      <button aria-label="Mesh settings" className={barButton}>
        <Icon><path d="M33 10L50 16L56 34L48 50L33 56L18 50L10 34L16 16Z" fill="#6fa8f0" stroke="#2b5fae" /><path d="M33 14L46 18L48 30L18 34L20 18Z" fill="#b4d4fc" stroke="none" /></Icon>
      </button>
      <span className="mx-[2px]">{caret}</span>
    </div>
  );
}

function RhinoWindow() {
  return (
    <main className="flex w-[48.300%] shrink-0 flex-col overflow-hidden bg-[#eeeff4] text-[#3a3d44]">
      <nav className="flex h-[21px] shrink-0 items-end gap-[21px] border-b border-[#d8dbe2] pl-[13px] whitespace-nowrap">
        {menuTabs.map((tab) => (
          <a key={tab} href="#" className="leading-[14px]">{tab}</a>
        ))}
      </nav>
      <div className="-mr-[12px] flex h-[29px] shrink-0 items-center pb-[5px] pl-[3px]">
        {curveTools.map((tool) => (
          <div key={tool.label} className="flex flex-1 items-center">
            {tool.sep && <span className="mr-px h-[18px] w-px bg-[#cfd2d9]" />}
            <button aria-label={tool.label} className={`flex size-[22px] shrink-0 items-center justify-center ${tool.active ? 'rounded-[2px] border border-[#8ba3cf] bg-[#d3dcf0]' : ''}`}>
              <Icon>{tool.art}</Icon>
            </button>
          </div>
        ))}
      </div>

      <div className="flex min-h-0 flex-1">
        <div className="mt-[4px] -mb-[4px] mr-[5px] grid w-[43px] shrink-0 grid-cols-2 content-between border-t border-[#d3d6dc]">
          {palette.map((tool) => (
            <button key={tool.label} aria-label={tool.label} className="flex h-[22px] items-center">
              <Icon>{tool.art}</Icon>
            </button>
          ))}
        </div>
        <section aria-label="Front viewport" className="relative flex-1 overflow-hidden bg-[#9ba2ab]">
          <Facade />
          <button className="absolute top-0 left-0 flex h-[14px] items-center bg-[#8298ee] pr-[4px] pl-[5px] font-bold text-[#1b2250]">
            Front
            <span className="mr-[2px] ml-[4px] h-[11px] w-px bg-[#4c5fae]" />
            <svg viewBox="0 0 8 8" className="size-[6px]" aria-hidden="true"><path d="M0 2h8L4 7z" fill="#1b2250" /></svg>
          </button>
        </section>
      </div>

      <div className="flex h-[23px] shrink-0 items-start pl-[47px] leading-[18px]">
        <button className="px-[8px]">Perspective</button>
        <button className="px-[4px]">Top</button>
        <button className="ml-[6px] rounded-b-[3px] border-r border-b border-[#d2d5dc] bg-[#f3f4f8] px-[3px]">Front</button>
        <button className="ml-[5px] px-[5px]">Right</button>
        <button aria-label="New viewport" className="ml-[7px] flex h-[18px] items-center">
          <svg viewBox="0 0 24 24" className="size-[8px]" fill="none" stroke="#777" strokeWidth="2" aria-hidden="true"><path d="M9 2h6v7h7v6h-7v7h-6v-7h-7v-6h7z" /></svg>
        </button>
      </div>

      <form className="flex h-[17px] shrink-0 items-center gap-[5px] overflow-hidden pl-[5px]">
        {snaps.map((snap) => (
          <label key={snap.name} className="flex shrink-0 items-center gap-[3px]">
            <span className="grid size-[11px]">
              <input
                type="checkbox"
                defaultChecked={snap.on}
                className={`peer size-[11px] appearance-none rounded-[2px] border bg-[#f8f9fb] [grid-area:1/1] checked:border-[#0b58b0] checked:bg-[#0f60b8] ${snap.faint ? 'border-[#d4d6da]' : 'border-[#7c8087]'}`}
              />
              <svg viewBox="0 0 11 11" className="pointer-events-none hidden size-[11px] [grid-area:1/1] peer-checked:block" fill="none" stroke="#fff" aria-hidden="true">
                <path d="M3 5.500L5 7.500L8.500 3.500" />
              </svg>
            </span>
            {snap.name}
          </label>
        ))}
      </form>

      <footer className="flex h-[11px] shrink-0 overflow-hidden border-t border-[#cfd2d8] text-center leading-[12px] whitespace-nowrap">
        <button className="w-[35px] shrink-0 border-r border-[#cfd2d8]">CPlane</button>
        <span className="flex-1 border-r border-[#cfd2d8]">x 19.02</span>
        <span className="flex-1 border-r border-[#cfd2d8]">y 0.54</span>
        <span className="flex-1 border-r border-[#cfd2d8]">z 0</span>
        <button className="flex-1 border-r border-[#cfd2d8] pl-[2px]">Centimeters</button>
        <button className="flex w-[132px] shrink-0 gap-[2px] border-r border-[#cfd2d8] pl-[2px]">
          <span className="mt-px size-[9px] bg-black" />
          Default
        </button>
        <button className="w-[54px] shrink-0 pr-[2px]">Grid Snap</button>
      </footer>
    </main>
  );
}

function GrasshopperWindow() {
  return (
    <section className="relative flex min-w-0 flex-1 flex-col overflow-hidden border-l border-[#7d828b] bg-[#f0f0f0] shadow-[-2px_0_5px_rgba(0,0,0,0.35)]">
      <div className="flex h-[58px] shrink-0 gap-[3px] overflow-hidden bg-linear-to-b from-[#dedede] to-[#f6f6f6] pl-px">
        {ribbon.map((group) => (
          <div key={group.name} className={`-mt-[8px] flex h-[56px] shrink-0 flex-col rounded-b-[3px] border border-[#b5b5b5] bg-linear-to-b from-[#cfcfcf] to-[#ececec] ${group.width}`}>
            <div className="flex flex-1 justify-between px-px">
              {group.columns.map(([top, bottom]) => (
                <div key={top.label} className={`flex flex-col ${top.sep ? 'border-l border-[#c2c2c2] pl-[4px]' : ''}`}>
                  <button aria-label={top.label}><Icon>{top.art}</Icon></button>
                  <button aria-label={bottom.label}><Icon>{bottom.art}</Icon></button>
                </div>
              ))}
            </div>
            <div className="-mx-px -mb-px flex h-[11px] items-center rounded-b-[3px] bg-linear-to-b from-[#2e2e2e] to-[#0c0c0c] px-[2px] font-['Liberation_Sans',sans-serif] text-[8px] leading-[10px] text-white">
              <span className="flex-1 text-center">{group.name}</span>
              <svg viewBox="0 0 10 10" className="size-[5px]" stroke="#ccc" strokeWidth="2" aria-hidden="true"><path d="M5 0V10M0 5H10" /></svg>
            </div>
          </div>
        ))}
      </div>

      <DocumentBar />

      <div className="relative min-h-0 flex-1 overflow-hidden bg-[#d4cfc7]">
        <Graph />
        <div className="absolute bottom-0 left-0 flex h-[22px] w-[116px] items-center border-t border-r border-[#555] bg-linear-to-b from-[#8d8d8d] to-[#dcdcdc] pl-px">
          <button aria-label="Draw icons" className="flex size-[19px] items-center justify-center border border-[#6d5a10] bg-[#ffd02c]">
            <Icon className="size-[18px]"><path d="M8 36Q14 56 20 50Q28 34 24 30Q26 54 34 46Q42 30 38 24Q40 48 48 40L54 16" stroke="#9a4f08" strokeWidth="6" /></Icon>
          </button>
          <button aria-label="Draw fancy wires" className="ml-[2px]">
            <Icon><path d="M20 8H46L60 33L46 58H20L6 33Z" fill="#1a1a1a" stroke="none" /><path d="M26 18L42 14L46 50L20 44Z" fill="#ddd" stroke="#888" /></Icon>
          </button>
          <button className="w-[22px] font-['Liberation_Serif',serif] text-[14px] leading-[18px] font-bold text-black italic">m²</button>
          <button aria-label="Align components">
            <Icon><path d="M14 14H48L50 28H36L16 52" strokeWidth="5" stroke="#111" /><circle cx="14" cy="14" r="5" fill="#fff" /><circle cx="50" cy="14" r="5" fill="#fff" /><circle cx="36" cy="30" r="5" fill="#fff" /><circle cx="16" cy="52" r="5" fill="#fff" /></Icon>
          </button>
          <button aria-label="Profiler">
            <Icon>
              <path d="M22 26L40 16M22 28L42 38M18 52H42" stroke="#444" />
              <g fill="#222" stroke="none" fontSize="24" className="font-['Liberation_Sans',sans-serif]">
                <text x="5" y="36">3</text><text x="44" y="24" fill="#555">4</text><text x="4" y="60">1</text><text x="44" y="52">2</text>
              </g>
            </Icon>
          </button>
        </div>
        <svg viewBox="0 0 126 114" className="absolute right-[8px] bottom-[6px] h-[38px] w-[42px]" aria-hidden="true">
          <defs>
            <radialGradient id="dial"><stop offset="0" stopColor="#ececec" /><stop offset="1" stopColor="#bdbdbd" /></radialGradient>
          </defs>
          <path d="M26 36Q36 10 64 10" fill="none" stroke="#0c0c0c" strokeWidth="7" />
          <path d="M6 26L34 24L26 46Z" fill="#0c0c0c" />
          <circle cx="74" cy="60" r="47" fill="url(#dial)" stroke="#8c8c8c" strokeWidth="3" />
          <circle cx="74" cy="60" r="43" fill="none" stroke="#fff" strokeWidth="4" />
          <path d="M88 16L104 24L90 32ZM116 70L108 86L100 74ZM60 104L44 96L58 88ZM32 50L40 34L48 46Z" fill="#fff" />
        </svg>
      </div>

      <footer className="flex h-[17px] shrink-0 items-center gap-[3px] pt-[3px] pr-[24px] pl-px leading-[14px] text-[#1c1c1c]">
        <Icon className="size-[13px]"><circle cx="33" cy="33" r="28" fill="#2a78c4" stroke="#123f78" strokeWidth="5" /><path d="M33 14V38M33 44V52" stroke="#fff" strokeWidth="8" /></Icon>
        <p className="flex-1 truncate">Save As successfully completed... (160 seconds ago)</p>
        <span className="text-[#858585]">1.0.0007</span>
      </footer>
    </section>
  );
}

export default function App() {
  return (
    <div className="flex h-screen min-h-[400px] overflow-hidden bg-[#eeeff4] font-['Open_Sans','Noto_Sans',sans-serif] text-[9px] leading-[14px]">
      <RhinoWindow />
      <GrasshopperWindow />
      <aside className="w-[6px] shrink-0 border-l border-[#9a9da5] bg-[#dfe0ea]" />
    </div>
  );
}
